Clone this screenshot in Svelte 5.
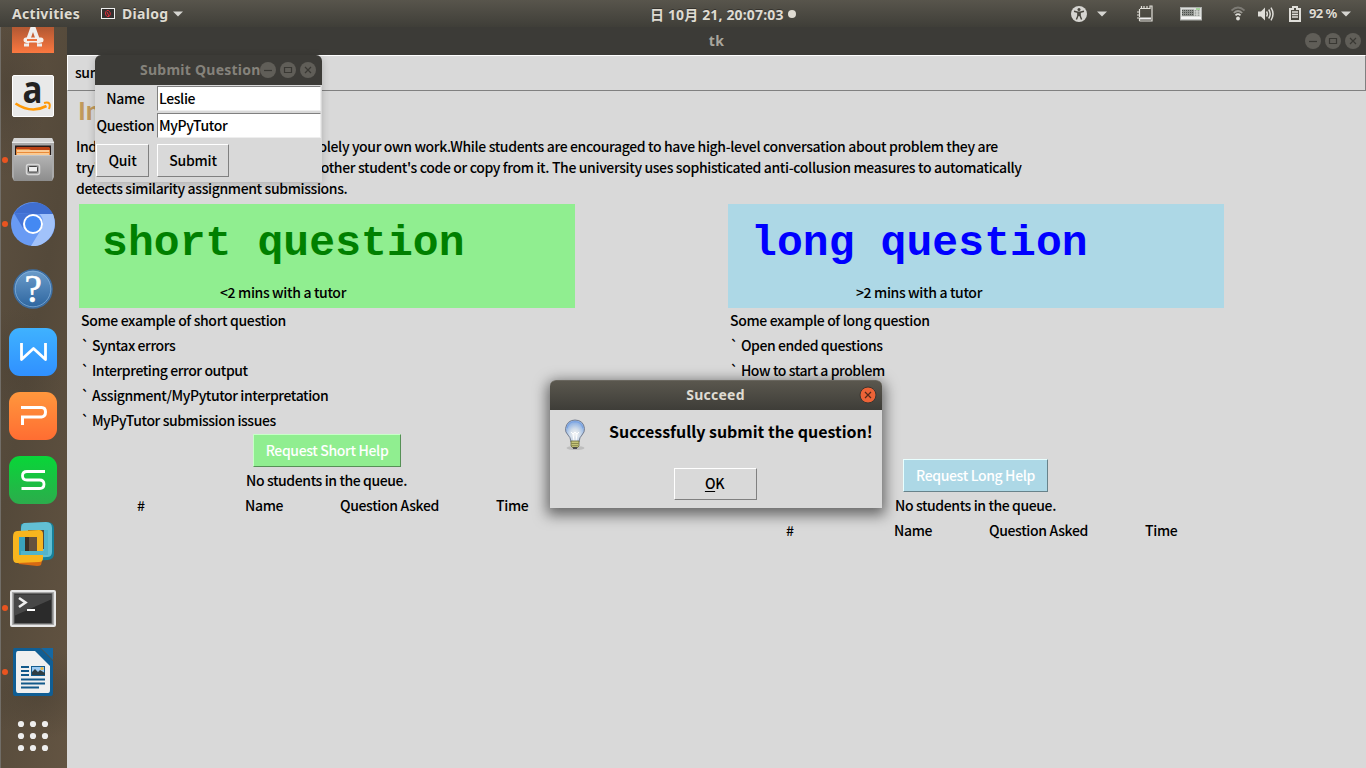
<script>
  const columns = [
    {
      kind: 'short',
      title: 'short question',
      note: '<2 mins with a tutor',
      intro: 'Some example of short question',
      examples: ['Syntax errors', 'Interpreting error output', 'Assignment/MyPytutor interpretation', 'MyPyTutor submission issues'],
      button: 'Request Short Help'
    },
    {
      kind: 'long',
      title: 'long question',
      note: '>2 mins with a tutor',
      intro: 'Some example of long question',
      examples: ['Open ended questions', 'How to start a problem', '', '', ''],
      button: 'Request Long Help'
    }
  ];
  const dock = ['software', 'amazon', 'files', 'chromium', 'help', 'writer', 'presentation', 'sheets', 'vmware', 'terminal', 'document', 'apps'];
  const running = ['files', 'chromium', 'terminal', 'document'];
  const dots = [0, 1, 2, 3, 4, 5, 6, 7, 8];
</script>

{#snippet winControls()}
  <div class="controls">
    <svg width="16" height="16" viewBox="0 0 16 16"><circle cx="8" cy="8" r="8" /><path d="M4 8.500h8" /></svg>
    <svg width="16" height="16" viewBox="0 0 16 16"><circle cx="8" cy="8" r="8" /><path d="M4.500 5.500h7v5h-7z" /></svg>
    <svg width="16" height="16" viewBox="0 0 16 16"><circle cx="8" cy="8" r="8" /><path d="M5 5l6 6M11 5l-6 6" /></svg>
  </div>
{/snippet}

<div class="desktop">
  <header class="topbar">
    <span class="activities">Activities</span>
    <svg class="app-icon" width="14" height="11" viewBox="0 0 14 11"><rect x=".5" y=".5" width="13" height="10" fill="#33302f" stroke="#eee" /><path d="M7 2.200c-2 .6-3 2-2.400 4 .5 1.700 1.300 2.300 2.400 2.500 1.600-.3 2.600-1.600 2.300-3.500C9 3.600 8 3 7 2.200zM6 4l2 4" fill="none" stroke="#e32d3b" /></svg>
    <span class="app">Dialog</span>
    <svg class="caret c1" width="10" height="6" viewBox="0 0 10 6"><path d="M0 .5h10L5 5.500z" /></svg>
    <span class="clock">日 10月 21, 20:07:03</span>
    <i class="clock-dot"></i>
    <div class="status">
      <svg width="16" height="16" viewBox="0 0 16 16"><circle cx="8" cy="8" r="8" fill="#d6d5d1" /><circle cx="8" cy="3.400" r="1.500" fill="#48463f" /><path d="M3 5.200l3.800 1h2.400l3.800-1M7 6v3.500L5.400 13.500M9 6v3.500l1.600 4" fill="none" stroke="#48463f" stroke-width="1.400" /><path d="M6.500 6h3v4h-3z" fill="#48463f" /></svg>
      <svg class="caret c2" width="10" height="6" viewBox="0 0 10 6"><path d="M0 .5h10L5 5.500z" /></svg>
      <svg class="note" width="17" height="17" viewBox="0 0 17 17"><path d="M3.500 16V13M1 13h3M1 10h3M1 7h3M3.500 12V4M4 3.500h1.500V1M5.500 3.500H8V1M8.500 3.500H11V1M11.500 3.500H14V1h2v15H3.500" fill="none" stroke="#e2e0d9" stroke-width="1.200" /><path d="M4 13.500h11" stroke="#eee" stroke-width="2" /></svg>
      <svg class="kbd" width="22" height="14" viewBox="0 0 22 14"><rect x=".5" y=".5" width="21" height="12.500" fill="#dcdedb" stroke="#adafac" /><path d="M2 2.500h12v6.500H2z" fill="#8c8f8b" /><path d="M2 3.500h12M2 5.500h12M2 7.500h12" stroke="#4c504c" stroke-width="1" stroke-dasharray="1 1" /><path d="M15.500 3v6M18.500 3v6" stroke="#979b97" stroke-width="1.800" stroke-dasharray="1.500 .7" /><path d="M16 2h4" stroke="#6fc55e" /><path d="M1 11h20" stroke="#f5f5f5" stroke-width="2" /></svg>
      <svg class="wifi" width="14" height="15" viewBox="0 0 14 15" fill="none"><path d="M.5 4.500Q7-1.500 13.500 4.500" stroke="#7d7b75" stroke-width="1.800" /><path d="M2.800 7Q7 3 11.200 7" stroke="#9b9993" stroke-width="1.700" /><path d="M4.500 9.300Q7 7 9.500 9.300" stroke="#dfded9" stroke-width="1.700" /><circle cx="7" cy="12.500" r="1.900" fill="#dfded9" /></svg>
      <svg class="sound" width="16" height="14" viewBox="0 0 16 14" fill="none"><path d="M0 4.500h3l4-4v13l-4-4H0z" fill="#dfded9" /><path d="M8.500 4.500q1.700 2.500 0 5M10.700 2.500q3 4.500 0 9M13 .6q4 6.400 0 12.800" stroke="#dfded9" stroke-width="1.500" /></svg>
      <svg class="battery" width="12" height="16" viewBox="0 0 12 16"><path d="M4 1h4v2h3v12H1V3h3z" fill="none" stroke="#dfded9" stroke-width="2" /><path d="M3 6h6M3 8.500h6M3 11h6" stroke="#dfded9" stroke-width="1.400" /></svg>
      <span class="percent">92 %</span>
      <svg class="caret c3" width="10" height="6" viewBox="0 0 10 6"><path d="M0 .5h10L5 5.500z" /></svg>
    </div>
  </header>

  <div class="body">
    <nav class="dock">
      {#each dock as item}
        <div class="slot" class:first={item === 'software'}>
          {#if running.includes(item)}<i class="running"></i>{/if}
          <svg width="48" height="48" viewBox="0 0 48 48">
            {#if item === 'software'}
              <rect x="3" y="3" width="42" height="42" fill="url(#soft)" /><path d="M18 35 24 18l6 17" fill="none" stroke="#eee" stroke-width="4" /><path d="M17 32h15" stroke="#f5eeea" stroke-width="5" stroke-linecap="round" /><path d="M18 32h10" stroke="#ec743f" stroke-width="2" /><path d="M15 37h5M28 37h5" stroke="#eee" stroke-width="3" />
            {:else if item === 'amazon'}
              <rect x="3.500" y="3.500" width="41" height="41" rx="1.500" fill="#e9e9e9" stroke="#fff" /><text x="13.500" y="31" font-family="Open Sans" font-weight="700" font-size="38" textLength="20" lengthAdjust="spacingAndGlyphs" letter-spacing="0" fill="#222">a</text><path d="M6.500 31.500q16 10.500 31 2.500" fill="none" stroke="#ff9907" stroke-width="2.600" /><path d="M35 31q8-2 5 6" fill="none" stroke="#ff9907" stroke-width="2" />
            {:else if item === 'files'}
              <path d="M3 6.500 5 2h38l2 4.500V41l-2 4H5l-2-4z" fill="#aaa" /><path d="M3 6.500 5 2h38l2 4.500z" fill="#d4d4d4" /><path d="M3 6.500h42" stroke="#e8e8e8" /><path d="M6 9.500h36V20H6z" fill="#251b19" /><path d="M7 12l1-1h32l1 1v8H7z" fill="#ba4113" /><path d="M7 13h13l2 1h19v6H7z" fill="#e98b3b" /><path d="M8 15h32M8 18h32" stroke="#ffdfb1" stroke-width="1.300" /><path d="M5 19h38v26H5z" fill="url(#metal)" /><path d="M5 19.500h38" stroke="#c6c6c6" /><rect x="17.500" y="28.500" width="13" height="10" rx="2" fill="#999" stroke="#d7d7d7" stroke-width="1.500" /><rect x="19.500" y="30.500" width="9" height="5.500" rx="1" fill="#eee" stroke="#444" />
            {:else if item === 'chromium'}
              <circle cx="24" cy="24" r="22" fill="#699bf4" /><path d="M5 13C13.500 1 30.500-1 39.500 8q3 3 4.500 6H23.500z" fill="#3f6ed0" /><path d="M5 13 14.500 29q-1-11 9-15z" fill="#4474d6" /><path d="M30.500 14H44c7 18-8 34-22 31.900L33.500 27q2-8-3-13z" fill="#a1c2fa" /><circle cx="24" cy="24" r="10" fill="#fff" /><circle cx="24" cy="24" r="8" fill="#4489f3" />
            {:else if item === 'help'}
              <circle cx="24" cy="25" r="19" fill="url(#helpg)" stroke="#3c6ea3" stroke-width="1.500" /><circle cx="24" cy="25" r="17.800" fill="none" stroke="#89b4dc" stroke-width=".7" /><text x="24" y="38" text-anchor="middle" font-family="Liberation Serif" font-size="39" fill="#fff" stroke="#fff" stroke-width=".6">?</text>
            {:else if item === 'writer'}
              <rect width="48" height="48" rx="11" fill="url(#blue)" /><path d="M12.500 15v16.500L24.500 20.500 36.500 31.500V15" fill="none" stroke="#fff" stroke-width="2.800" stroke-linejoin="round" />
            {:else if item === 'presentation'}
              <rect width="48" height="48" rx="11" fill="url(#orange)" /><path d="M12 15.500h20.500q4 0 4 4.500t-4 5h-19v8" fill="none" stroke="#fff" stroke-width="3" />
            {:else if item === 'sheets'}
              <rect width="48" height="48" rx="11" fill="url(#green)" /><path d="M36 15.500H18q-4.500 0-4.500 4.200T18 24h12.500q4.500 0 4.500 4.200t-4.500 4.300h-18" fill="none" stroke="#fff" stroke-width="2.800" />
            {:else if item === 'vmware'}
              <path d="M12 4 38 2q7 0 7 7v25q0 5-6 6l-22 1q-6 0-6-6z" fill="#17809a" /><path fill-rule="evenodd" d="M15 3 37 2q6 0 6 6v24q0 5-5 5l-20 1q-6 0-6-6V9q0-5 3-6zM19 10v19h16V10z" fill="#62bfd4" /><path d="M19 10h16v19H19z" fill="#54493a" /><path d="M6 38l28-1-2 8q-1 1-4 1L10 44z" fill="#d76a13" /><path fill-rule="evenodd" d="M8 11 30 10q4 0 4 4v24q0 4-4 4L8 43q-4 0-4-5V17q0-6 4-6zM10 17v18h18V17z" fill="#f8b51e" /><path d="M10 17h18v18H10z" fill="#3aa3be" /><path d="M16 17h12v14H16z" fill="#3b3027" /><path d="M20 17h8v14h-8z" fill="#65513e" /><path d="M12 33h25V10" fill="none" stroke="#52b4cc" stroke-width="4" />
            {:else if item === 'terminal'}
              <g transform="translate(0 1.500)"><rect x="2" y="5.500" width="44" height="35" rx="1" fill="#aaa" stroke="#e8e8e8" stroke-width="2" /><rect x="5" y="8" width="38" height="30" fill="#2b2b2b" stroke="#666" /><path d="M6 9h36v5L6 30z" fill="#474747" /><path d="m10 12.500 6.500 4.500-6.500 4.500" fill="none" stroke="#eee" stroke-width="2.600" /><path d="M18 24.500h8" stroke="#fff" stroke-width="2" /></g>
            {:else if item === 'document'}
              <path d="M5 0h26l13 13v32q0 3-2 3H6q-2 0-2-3V3q0-3 1-3z" fill="#105e94" /><path d="M32 0h12v12z" fill="#1468a3" /><path d="M9 3h17l15 15v24q0 3-2 3H9q-2 0-2-3V6q0-3 2-3z" fill="#f0f0f0" /><path d="M12 19h8M12 23h8M12 27h8M12 31.500h24M12 35.500h24M12 39.500h18" stroke="#12598a" stroke-width="1.800" /><rect x="22.500" y="18.500" width="13" height="9" fill="#9ccaf2" stroke="#135c8e" /><path d="M23 27v-3l3-3 3 3 2-2 5 3v2z" fill="#303e43" /><circle cx="33" cy="20.500" r="1.500" fill="#f1b83a" />
            {:else}
              {#each dots as d}<circle cx={12 + (d % 3) * 12} cy={12 + Math.floor(d / 3) * 12} r="3.100" fill="#eee" />{/each}
            {/if}
          </svg>
        </div>
      {/each}
      <svg width="0" height="0" class="defs"><defs>
        <linearGradient id="soft" x2="0" y2="1"><stop stop-color="#a0532c" /><stop offset=".45" stop-color="#b95b34" /><stop offset="1" stop-color="#fb7840" /></linearGradient>
        <linearGradient id="metal" x2="0" y2="1"><stop stop-color="#b4b4b4" /><stop offset="1" stop-color="#8d8d8d" /></linearGradient>
        <linearGradient id="helpg" x2="0" y2="1"><stop stop-color="#6c9dcb" /><stop offset="1" stop-color="#2d659f" /></linearGradient>
        <linearGradient id="blue" x2="0" y2="1"><stop stop-color="#3fb2ff" /><stop offset="1" stop-color="#3090ff" /></linearGradient>
        <linearGradient id="orange" x2="0" y2="1"><stop stop-color="#ff973d" /><stop offset="1" stop-color="#ff6d32" /></linearGradient>
        <linearGradient id="green" x2="0" y2="1"><stop stop-color="#08d638" /><stop offset="1" stop-color="#2cac4c" /></linearGradient>
      </defs></svg>
    </nav>

    <main class="window">
      <div class="main-title"><span>tk</span>{@render winControls()}</div>
      <div class="menubar">summary</div>
      <h1>Important</h1>
      <p class="policy">
        <span>Individual assessment items must be solely your own work.While students are encouraged to have high-level conversation about problem they are</span>
        <span>trying to solve, you must not look at another student's code or copy from it. The university uses sophisticated anti-collusion measures to automatically</span>
        <span>detects similarity assignment submissions.</span>
      </p>
      <div class="columns">
        {#each columns as c}
          <section class={c.kind}>
            <div class="banner"><h2>{c.title}</h2><span>{c.note}</span></div>
            <div class="line">{c.intro}</div>
            {#each c.examples as e}<div class="line example">{e ? '` ' + e : ''}</div>{/each}
            <div class="action"><button>{c.button}</button></div>
            <div class="line queue">No students in the queue.</div>
            <div class="table-head"><span>#</span><span>Name</span><span>Question Asked</span><span>Time</span></div>
          </section>
        {/each}
      </div>
    </main>
  </div>

  <div class="dialog submit">
    <div class="dialog-title"><span>Submit Question</span>{@render winControls()}</div>
    <div class="form">
      <label for="name">Name</label><input id="name" value="Leslie" />
      <label for="question">Question</label><input id="question" value="MyPyTutor" />
    </div>
    <div class="form-buttons"><button>Quit</button><button>Submit</button></div>
  </div>

  <div class="dialog succeed">
    <div class="dialog-title">
      <span>Succeed</span>
      <svg class="close" width="18" height="18" viewBox="0 0 18 18"><circle cx="9" cy="9" r="8" fill="#ed6337" stroke="#393631" /><path d="M6 6l6 6M12 6l-6 6" stroke="#54291a" stroke-width="1.200" /></svg>
    </div>
    <div class="message">
      <svg width="24" height="32" viewBox="0 0 24 32">
        <defs><radialGradient id="bulb" cx=".5" cy=".65"><stop stop-color="#f4f5f5" /><stop offset=".5" stop-color="#d3deea" /><stop offset="1" stop-color="#98b8e4" /></radialGradient></defs>
        <ellipse cx="12.500" cy="29" rx="9" ry="2" fill="#aaa" opacity=".6" />
        <path d="M8 23q-.5-5-3-7Q2 13 2.500 9.500 4 1.200 12 1q8.500.2 9.500 8.500.3 3.500-2.500 6.500-2.500 2-3 7z" fill="url(#bulb)" stroke="#747d90" />
        <path d="M4 9.500Q5 3 12 2.700q7 .3 8 6.800" fill="none" stroke="#6e9adf" stroke-width="1.200" opacity=".7" />
        <path d="M8 13l2 2 2-2 2 2 2-2M10 15l1 7M14 15l-1 7" fill="none" stroke="#fff" />
        <path d="M8 22h8v5l-2 2h-4l-2-2z" fill="#c5c579" stroke="#68683d" stroke-width=".8" /><path d="M8 24.500h8M8 26.700h7" stroke="#8b8b50" /><path d="M10 29h4" stroke="#303040" stroke-width="1.500" />
      </svg>
      <strong>Successfully submit the question!</strong>
    </div>
    <button><span><u>O</u>K</span></button>
  </div>
</div>

<style>
  :global(body) { margin: 0; overflow: hidden; }
  * { box-sizing: border-box; }
  .desktop { position: relative; width: 1366px; height: 768px; display: flex; flex-direction: column; overflow: hidden; background: #d9d9d9; color: #000; font: 500 14px/21px "Noto Sans CJK SC", sans-serif; letter-spacing: -.35px; white-space: nowrap; }
  .topbar { height: 27px; flex: none; display: flex; align-items: center; padding-left: 12px; background: linear-gradient(#58554c, #3f3e38); color: #dfdbd2; font: 700 14px/27px "Noto Sans", "Noto Sans CJK SC", sans-serif; letter-spacing: .3px; text-shadow: 0 -1px #35332e; }
  .activities { width: 89px; }
  .app-icon { margin-right: 7px; }
  .app { width: 51px; }
  .caret { fill: #d6d5d1; }
  .clock { margin-left: 467px; width: 134px; letter-spacing: .15px; position: relative; top: 1px; }
  .clock-dot { width: 8px; height: 8px; margin-left: 4px; border-radius: 50%; background: #dfdbd2; }
  .status { display: flex; align-items: center; margin-left: auto; padding-right: 15px; }
  .c2 { margin-left: 10px; }
  .note { margin-left: 29px; }
  .kbd { margin-left: 27px; }
  .wifi { margin-left: 29px; }
  .sound { margin-left: 13px; }
  .battery { margin-left: 15px; }
  .percent { margin-left: 8px; width: 28px; font-size: 13px; letter-spacing: -.6px; }
  .status .c3 { margin-left: 4px; }
  .body { display: flex; flex: 1; min-height: 0; }
  .dock { width: 67px; flex: none; overflow: hidden; background: radial-gradient(ellipse 60px 45px at 60% 90%, #41392e66, transparent), radial-gradient(ellipse 50px 60px at 20% 46%, #443b3055, transparent), radial-gradient(ellipse 40px 90px at 10% 8%, #443c3277, transparent), linear-gradient(100deg, #5e5141, #54493a 45%, #635442); box-shadow: inset 1px 0 #716d67; }
  .slot { height: 64px; display: flex; align-items: center; padding-left: 9px; position: relative; }
  .slot.first { height: 37px; align-items: flex-end; padding-bottom: 8px; }
  .running { position: absolute; left: 2px; top: 29px; width: 6px; height: 6px; border-radius: 50%; background: #e95420; }
  .defs { position: absolute; }
  .window { width: 1299px; display: flex; flex-direction: column; }
  .main-title { height: 28px; display: flex; align-items: center; justify-content: center; position: relative; flex: none; background: #3c3b37; color: #a9a69d; font: 700 14px/28px "Noto Sans", sans-serif; letter-spacing: .3px; }
  .controls { position: absolute; right: 5px; top: 6px; display: flex; gap: 4px; }
  .controls circle { fill: #605e58; }
  .controls path { fill: none; stroke: #393833; stroke-width: 1.200; }
  .menubar { height: 36px; flex: none; padding: 6px 7px 0; border: 1px solid #808080; border-top-color: #fff; border-left-color: #fff; }
  h1 { margin: 0; padding-left: 11px; height: 45px; font: 700 24px/38px "Noto Sans CJK SC", sans-serif; color: #c19a5b; }
  .policy { margin: 0; padding-left: 9px; height: 68px; display: flex; flex-direction: column; letter-spacing: -.36px; }
  .columns { display: grid; grid-template-columns: 649px 649px; }
  section { padding-left: 12px; }
  .banner { width: 496px; height: 104px; display: flex; flex-direction: column; align-items: center; }
  .short .banner { background: #90ee90; }
  .long .banner { background: #add8e6; }
  h2 { align-self: flex-start; margin: 0; padding: 17px 0 0 23px; height: 78px; font: 700 43px/46px "Liberation Mono", monospace; letter-spacing: .1px; }
  .short h2 { color: #008000; }
  .long h2 { color: #00f; }
  .banner span { position: relative; left: -44px; }
  .long .banner span { left: -57px; }
  .line { height: 25px; line-height: 25px; padding-left: 2px; }
  .example { letter-spacing: -.42px; }
  .action { width: 496px; height: 35px; display: flex; justify-content: center; padding-top: 1px; }
  button { height: 33px; padding: 0; border: 1px solid #808080; border-top-color: #fff; border-left-color: #fff; background: #d9d9d9; font: inherit; letter-spacing: inherit; color: #000; }
  .action button { width: 148px; color: #fff; background: #90ee90; border-color: #c8ffc8 #569056 #569056 #c8ffc8; }
  .long .action button { width: 145px; margin-right: 1px; background: #add8e6; border-color: #e8ffff #68828a #68828a #e8ffff; }
  .queue { width: 496px; padding-right: 3px; text-align: center; letter-spacing: -.4px; }
  .table-head { display: grid; grid-template-columns: 108px 95px 156px 60px; padding-left: 58px; line-height: 25px; }
  .dialog { position: absolute; background: #d9d9d9; border-radius: 6px 6px 0 0; }
  .dialog-title { display: flex; align-items: center; justify-content: center; position: relative; border-radius: 6px 6px 0 0; font: 700 14px/30px "Noto Sans", sans-serif; letter-spacing: .25px; height: 30px; }
  .submit { left: 95px; top: 55px; width: 227px; height: 127px; box-shadow: 0 2px 8px #0003; }
  .submit .dialog-title { justify-content: flex-start; padding-left: 45px; background: #3c3b37; color: #85827b; }
  .submit .controls { right: 6px; top: 7px; }
  .form { display: grid; grid-template-columns: 62px 164px; grid-template-rows: 27px 27px; align-items: center; text-align: center; }
  .form label { letter-spacing: -.3px; padding-right: 1px; }
  input { width: 164px; height: 25px; padding: 0 1px 1px; border: 1px solid #808080; border-right-color: #eee; border-bottom-color: #eee; background: #fff; font: inherit; letter-spacing: -.38px; color: #000; }
  .form-buttons { display: flex; gap: 8px; padding: 5px 1px; letter-spacing: -.2px; }
  .form-buttons button:first-child { width: 53px; }
  .form-buttons button:last-child { width: 72px; }
  .succeed { left: 550px; top: 380px; width: 332px; height: 128px; display: flex; flex-direction: column; align-items: center; box-shadow: 0 4px 14px 3px #0008; }
  .succeed .dialog-title { width: 100%; line-height: 28px; padding: 0 1px 1px 0; background: linear-gradient(#5a574e, #3e3d38); color: #dfdbd2; border-top: 1px solid #69665e; }
  .close { position: absolute; right: 5px; top: 5px; }
  .message { width: 100%; height: 58px; display: flex; padding: 9px 0 0 13px; }
  .message strong { margin-left: 22px; font-size: 16px; line-height: 24px; font-weight: 700; letter-spacing: -.02px; }
  .succeed > button { width: 83px; height: 32px; margin-right: 2px; padding: 0 1px 1px 0; }
  u { text-underline-offset: 2px; }
</style>
